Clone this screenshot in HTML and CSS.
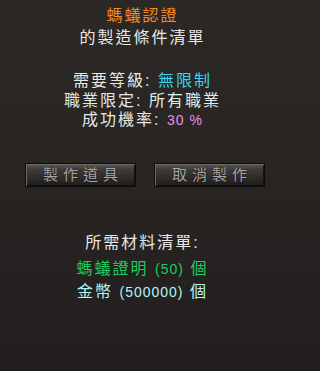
FILE: index.html
```html
<!DOCTYPE html>
<html lang="zh-Hant">
<head>
<meta charset="utf-8">
<link rel="stylesheet" href="styles.css">
</head>
<body>
<div class="panel">
  <div class="head">
    <div class="line orange">螞蟻認證</div>
    <div class="line white">的製造條件清單</div>
  </div>
  <div class="reqs">
    <div class="line white">需要等級: <span class="val cyan">無限制</span></div>
    <div class="line white">職業限定: <span class="val pale">所有職業</span></div>
    <div class="line white">成功機率: <span class="val pink lat">30 %</span></div>
  </div>
  <div class="buttons">
    <div class="btn">製作道具</div>
    <div class="btn">取消製作</div>
  </div>
  <div class="mats">
    <div class="line white m1">所需材料清單:</div>
    <div class="line green m2">螞蟻證明 <span class="val lat">(50)</span> 個</div>
    <div class="line ice m3">金幣 <span class="val lat">(500000)</span> 個</div>
  </div>
</div>
</body>
</html>
```
FILE: styles.css
```css
html {
  background: linear-gradient(180deg, #2c2826 0%, #292523 45%, #221e1e 100%) no-repeat;
  background-color: #221e1e;
  min-height: 100%;
}
html, body {
  margin: 0;
  padding: 0;
}
body {
  width: 285px;
  height: 371px;
  overflow: hidden;
}
.panel {
  width: 285px;
  height: 371px;
  box-sizing: border-box;
  background: linear-gradient(180deg, #2c2826 0%, #292523 45%, #221e1e 100%);
  font-family: "Liberation Sans", "Noto Sans CJK TC", sans-serif;
  font-size: 16px;
  letter-spacing: 2px;
  text-align: center;
  padding-top: 5px;
}
.line {
  white-space: nowrap;
}
.val {
  display: inline-block;
}
.head .line {
  line-height: 22px;
  height: 22px;
}
.reqs {
  margin-top: 22px;
}
.reqs .line,
.reqs .val {
  line-height: 19.5px;
  height: 19.5px;
}
.mats .line,
.mats .val {
  line-height: 24px;
  height: 24px;
}
.mats .m2 {
  margin-top: 2px;
}
.mats .m3 {
  margin-top: -1px;
}
.lat {
  font-family: "Liberation Sans", "Noto Sans", sans-serif;
  font-size: 14px;
  letter-spacing: 1px;
}
.orange { color: #f28c1c; }
.white { color: #e8e8e6; }
.cyan { color: #3ed6ee; }
.pale { color: #dcf0ee; }
.pink { color: #e88ee8; }
.green { color: #1ccc62; }
.ice { color: #b2f6f4; }
.buttons {
  display: flex;
  gap: 18px;
  padding-left: 25px;
  margin-top: 33.5px;
}
.btn {
  width: 111px;
  height: 24px;
  box-sizing: border-box;
  border: 1px solid #0c0a0a;
  background: linear-gradient(180deg, #5c5856 0%, #3e3a38 25%, #2c2826 70%, #1e1a1a 100%);
  box-shadow: inset 1px 1px 0 #6e6a68, inset -1px -1px 0 #141010;
  color: #a9a7a6;
  font-size: 15px;
  letter-spacing: 5px;
  text-indent: 5px;
  line-height: 22px;
  text-align: center;
  text-shadow: 0 0 1px #000;
}
.mats {
  margin-top: 44px;
}
```
